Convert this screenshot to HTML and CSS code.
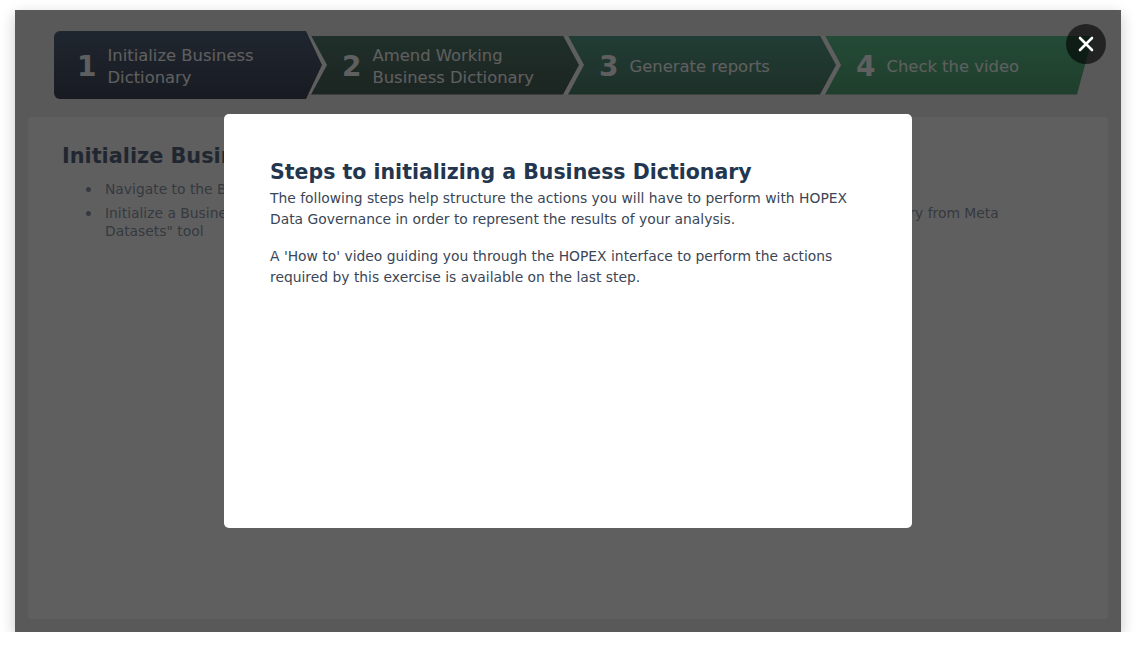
FILE: index.html
```html
<!DOCTYPE html>
<html lang="en">
<head>
<meta charset="utf-8">
<title>Initialize Business Dictionary</title>
<link rel="stylesheet" href="styles.css">
</head>
<body>
<div class="page">
  <div class="frame">
    <div class="steps">
      <div class="step step-first"><span class="num">1</span><span class="label">Initialize Business Dictionary</span></div>
      <div class="step step-second"><span class="num">2</span><span class="label">Amend Working Business Dictionary</span></div>
      <div class="step step-third"><span class="num">3</span><span class="label">Generate reports</span></div>
      <div class="step step-last"><span class="num">4</span><span class="label">Check the video</span></div>
    </div>
    <div class="panel">
      <h2 class="panel-title">Initialize Business Dictionary</h2>
      <ul class="panel-list">
        <li>Navigate to the Business Dictionary workspace</li>
        <li>Initialize a Business Dictionary for your actual working environment in HOPEX using the "Initialize Business Dictionary from Meta Datasets" tool</li>
      </ul>
    </div>
    <div class="overlay"></div>
    <div class="modal">
      <h2 class="modal-title">Steps to initializing a Business Dictionary</h2>
      <p class="modal-text">The following steps help structure the actions you will have to perform with HOPEX Data Governance in order to represent the results of your analysis.</p>
      <p class="modal-text">A 'How to' video guiding you through the HOPEX interface to perform the actions required by this exercise is available on the last step.</p>
    </div>
    <button class="close" type="button" aria-label="Close">
      <svg width="16" height="16" viewBox="0 0 16 16"><path d="M2 2 L14 14 M14 2 L2 14" stroke="#ffffff" stroke-width="2.6" stroke-linecap="round" fill="none"/></svg>
    </button>
  </div>
</div>
</body>
</html>
```

FILE: styles.css
```css
html, body {
  margin: 0;
  padding: 0;
  background: #ffffff;
  font-family: "DejaVu Sans", Verdana, sans-serif;
}

.page {
  padding: 10px 15px 0;
}

.frame {
  position: relative;
  width: 1106px;
  height: 622px;
  box-sizing: border-box;
  background: #efefef;
  padding: 21px 13px 13px;
  display: flex;
  flex-direction: column;
  box-shadow: 0 5px 14px rgba(0, 0, 0, 0.22);
}

.steps {
  display: flex;
  align-items: center;
  height: 68px;
  margin: 0 26px;
  background: linear-gradient(#ffffff, #ffffff) no-repeat;
  background-position: 0 5px;
  background-size: 1016px 58px;
}

.step {
  flex: none;
  width: 268px;
  height: 59px;
  box-sizing: border-box;
  padding: 4px 0 0 31px;
  margin-left: -11px;
  display: flex;
  align-items: center;
  color: #ffffff;
  clip-path: polygon(0 0, calc(100% - 16px) 0, 100% 50%, calc(100% - 16px) 100%, 0 100%, 16px 50%);
}

.step-first {
  height: 68px;
  margin-left: 0;
  padding-left: 23px;
  border-radius: 6px 0 0 6px;
  background: linear-gradient(#566680, #41485a);
  clip-path: polygon(0 0, calc(100% - 16px) 0, 100% 50%, calc(100% - 16px) 100%, 0 100%);
}

.step-second {
  background: linear-gradient(#567f71, #4b635b);
}

.step-third {
  background: linear-gradient(#5aa38d, #4e806c);
}

.step-last {
  background: linear-gradient(#60c993, #55a678);
  clip-path: polygon(0 0, 100% 0, calc(100% - 16px) 100%, 0 100%, 16px 50%);
}

.num {
  font-size: 28px;
  font-weight: bold;
  line-height: 1;
  margin-right: 11px;
}

.label {
  font-size: 16.4px;
  line-height: 22px;
  max-width: 190px;
}

.panel {
  flex: 1;
  margin-top: 18px;
  background: #ffffff;
  border-radius: 4px;
  padding: 27px 50px 0 34px;
}

.panel-title {
  margin: 0;
  font-size: 20.8px;
  line-height: 24px;
  font-weight: bold;
  color: #5a6a82;
}

.panel-list {
  list-style: none;
  margin: 12px 0 0;
  padding-left: 43px;
  font-size: 13.86px;
  line-height: 18px;
  color: #8f9aab;
}

.panel-list li {
  position: relative;
}

.panel-list li::before {
  content: "";
  position: absolute;
  left: -19px;
  top: 7px;
  width: 5px;
  height: 5px;
  border-radius: 50%;
  background: #8f9aab;
}

.panel-list li + li {
  margin-top: 6px;
}

.overlay {
  position: absolute;
  inset: 0;
  background: rgba(0, 0, 0, 0.627);
}

.modal {
  position: absolute;
  left: 209px;
  top: 104px;
  width: 688px;
  height: 414px;
  box-sizing: border-box;
  padding: 45px 46px;
  background: #ffffff;
  border-radius: 5px;
}

.modal-title {
  margin: 0;
  font-size: 20.5px;
  line-height: 26px;
  font-weight: bold;
  color: #233650;
}

.modal-text {
  margin: 3px 0 16px;
  font-size: 13.86px;
  line-height: 21px;
  color: #3a4656;
}

.modal-text + .modal-text {
  margin-top: 0;
}

.close {
  position: absolute;
  left: 1051px;
  top: 14px;
  width: 40px;
  height: 40px;
  border: none;
  border-radius: 50%;
  padding: 0;
  background: rgba(0, 0, 0, 0.6);
  display: flex;
  align-items: center;
  justify-content: center;
}
```
